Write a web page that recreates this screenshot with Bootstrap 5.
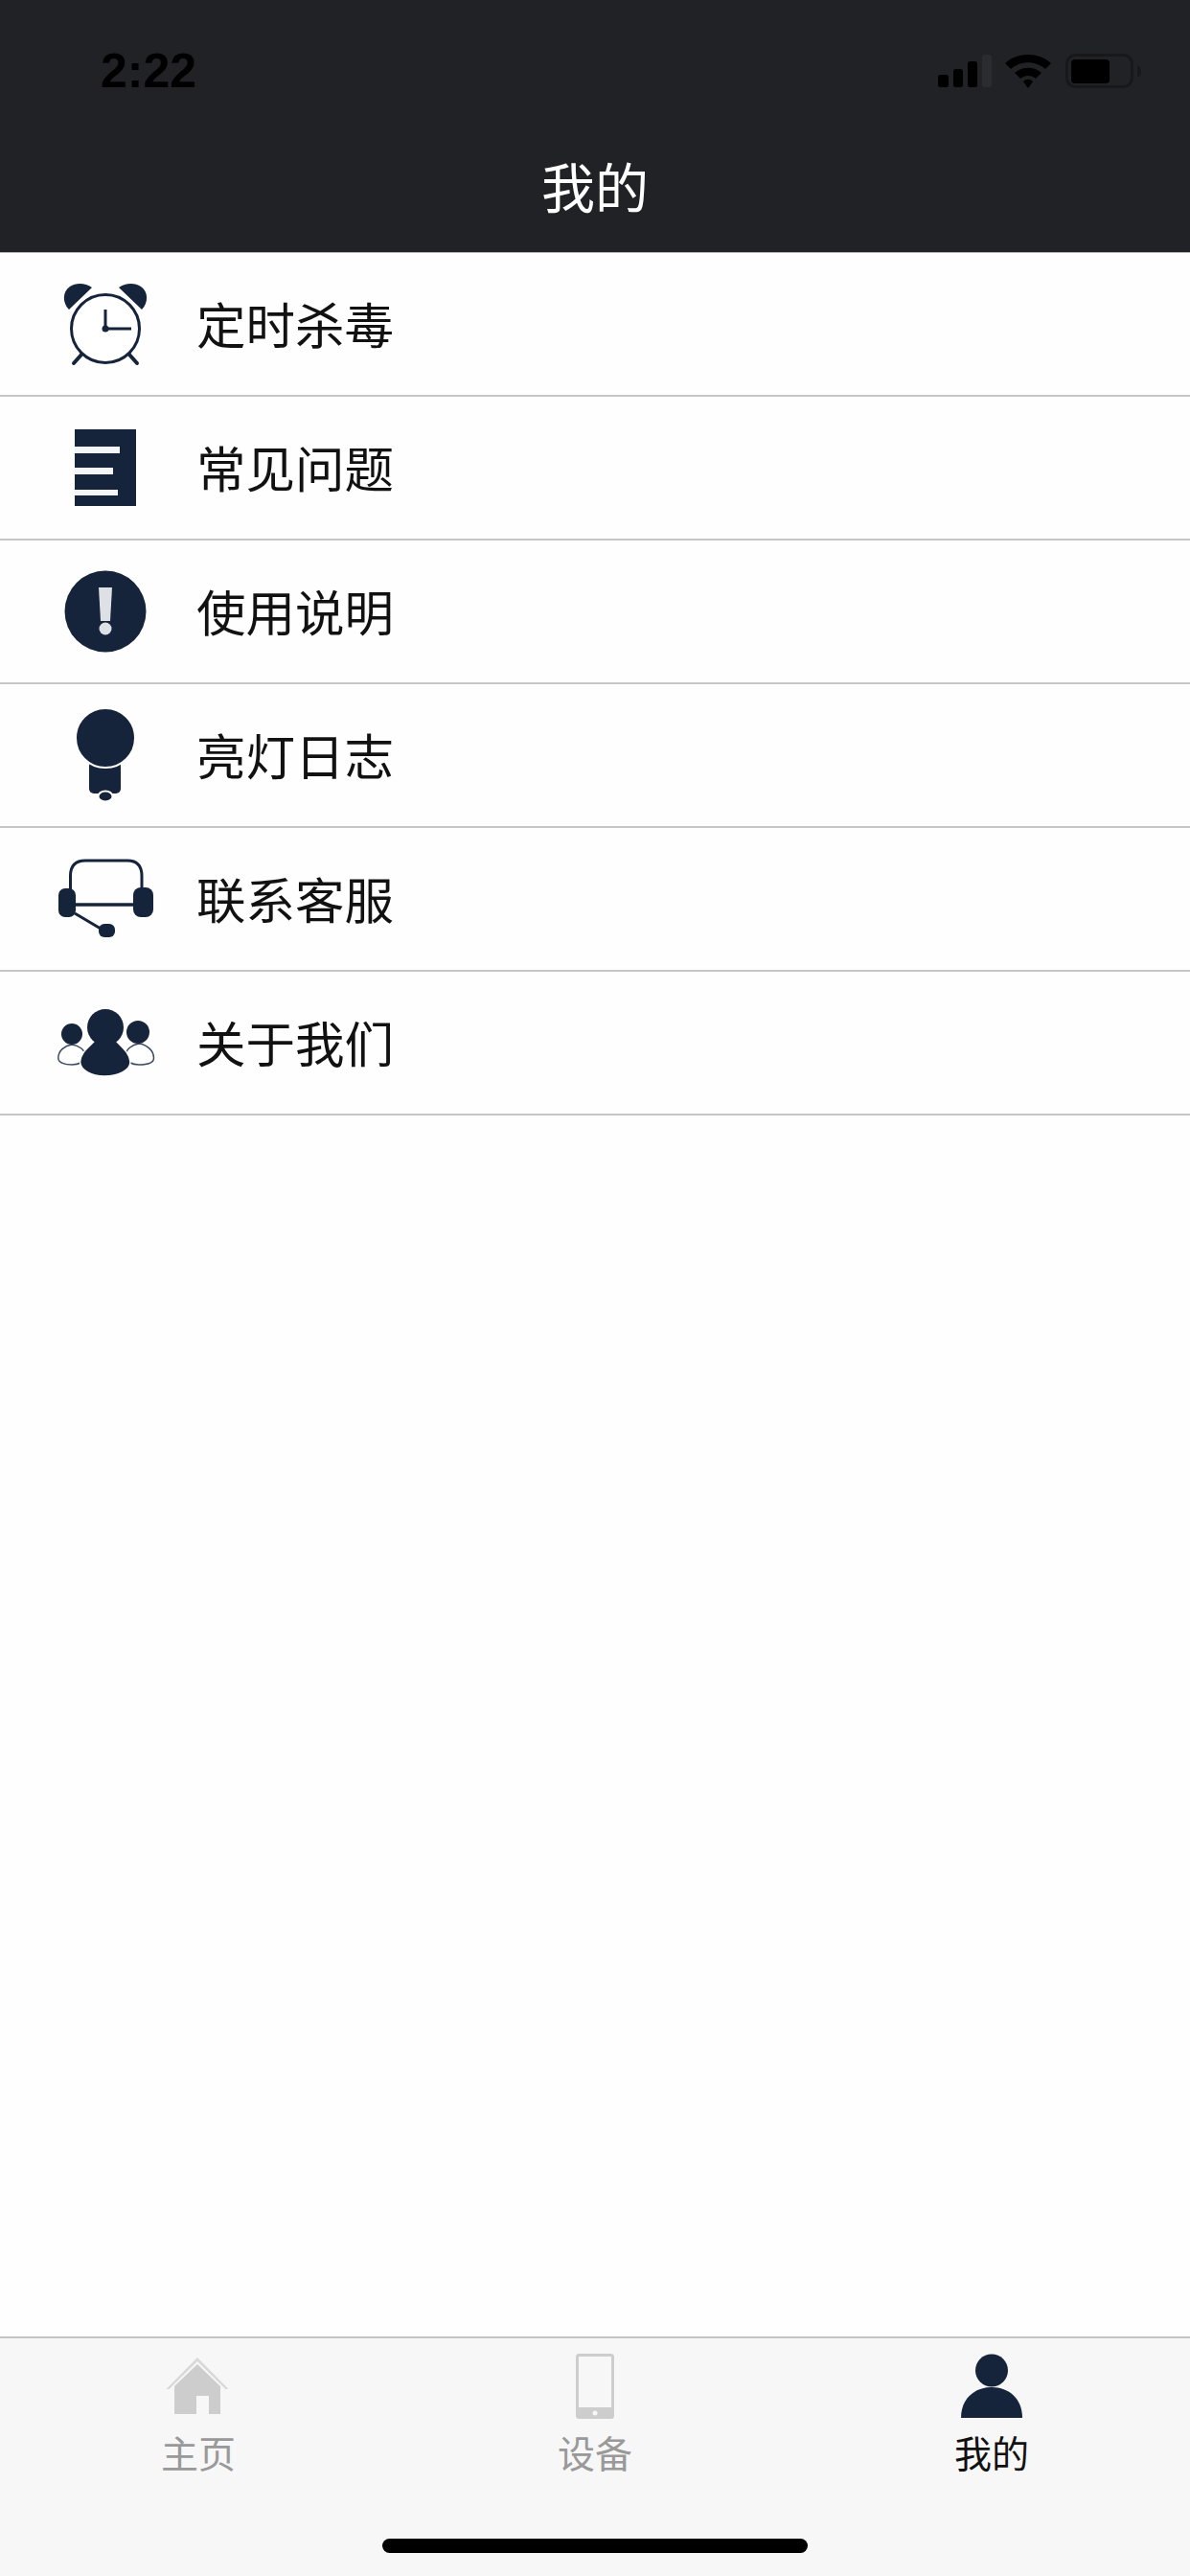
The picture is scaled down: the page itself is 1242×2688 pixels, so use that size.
<!DOCTYPE html>
<html lang="zh-CN">
<head>
  <meta charset="UTF-8">
  <title>我的</title>
  <link rel="stylesheet" href="https://cdn.jsdelivr.net/npm/bootstrap@5.3.0/dist/css/bootstrap.min.css">
  <style>
    body { font-family: "Liberation Sans", "Noto Sans CJK SC", sans-serif; background: #fefefe; }
    .app-screen { height: 2688px; }
    .app-head { background: #212226; border-bottom: 1px solid #b5b5b5; }
    .status-row { height: 148px; padding: 0 51px 0 105px; }
    .status-time { font-size: 50px; font-weight: 700; line-height: 1; color: #000; }
    .head-title { font-family: "Noto Sans CJK SC", sans-serif; font-size: 56px; line-height: 90px; padding-bottom: 25px; color: #fff; text-align: center; }
    .list-group-flush > .list-group-item.menu-row { height: 150px; padding: 0 0 0 55px; border-width: 0 0 2px; border-style: solid; border-color: #c6c6c6; border-radius: 0; background: transparent; }
    .menu-icon { width: 110px; height: 100px; flex: none; margin-right: 40px; }
    .menu-text { font-family: "Noto Sans CJK SC", sans-serif; font-size: 51.5px; line-height: 1; padding-bottom: 2px; color: #111; }
    .tab-wrap { height: 250px; background: #f7f7f7; border-top: 2px solid #c4c4c4; padding-top: 15px; }
    .tab-icon { width: 80px; height: 72px; display: block; margin: 0 auto; }
    .tab-text { font-family: "Noto Sans CJK SC", sans-serif; font-size: 39px; line-height: 46px; margin-top: 8px; text-align: center; color: #999; }
    .tab-on { color: #111; }
    .home-bar { width: 444px; height: 15px; background: #000; border-radius: 8px; margin: 68px auto 0; }
  </style>
</head>
<body>
<div class="app-screen d-flex flex-column">
  <header class="app-head">
    <div class="status-row d-flex justify-content-between align-items-center">
      <span class="status-time">2:22</span>
      <svg width="212" height="36" viewBox="979 56 212 36">
        <rect x="979" y="78" width="11" height="13" rx="2.5" fill="#000"/>
        <rect x="995" y="72" width="10" height="19" rx="2.5" fill="#000"/>
        <rect x="1010" y="64" width="10" height="27" rx="2.5" fill="#000"/>
        <rect x="1025" y="57" width="10" height="34" rx="2.5" fill="#2b2c30"/>
        <path d="M1049 66 C1062 54 1084 54 1097 66 L1091 72 C1081 63 1065 63 1055 72 Z" fill="#000"/>
        <path d="M1059 76 C1067 69 1079 69 1087 76 L1081 82 C1076 78 1070 78 1065 82 Z" fill="#000"/>
        <path d="M1068 85 C1071 82 1075 82 1078 85 L1073 92 Z" fill="#000"/>
        <rect x="1113.5" y="57.5" width="68" height="33" rx="9" fill="none" stroke="#17181b" stroke-width="3"/>
        <rect x="1118" y="62" width="40" height="25" rx="4" fill="#000"/>
        <path d="M1187 68 C1190 70 1191 72 1191 74.500 C1191 77 1190 79 1187 81 Z" fill="#17181b"/>
      </svg>
    </div>
    <div class="head-title">我的</div>
  </header>

  <div class="list-group list-group-flush flex-grow-1">
    <a class="list-group-item menu-row d-flex align-items-center">
      <svg class="menu-icon" viewBox="0 0 110 100">
        <path d="M17 35 C10 28 10 16 18 11 C24 7 34 7 41 12 Z" fill="#15233b"/>
        <path d="M93 35 C100 28 100 16 92 11 C86 7 76 7 69 12 Z" fill="#15233b"/>
        <circle cx="55" cy="55" r="35.500" fill="#fff" stroke="#15233b" stroke-width="3"/>
        <path d="M55 35 V55 H82" fill="none" stroke="#15233b" stroke-width="3"/>
        <circle cx="55" cy="55" r="3.500" fill="#15233b"/>
        <path d="M30 82 L22 91 M80 82 L88 91" stroke="#15233b" stroke-width="4" stroke-linecap="round"/>
      </svg>
      <span class="menu-text">定时杀毒</span>
    </a>
    <a class="list-group-item menu-row d-flex align-items-center">
      <svg class="menu-icon" viewBox="0 0 110 100">
        <rect x="23" y="10" width="64" height="80" fill="#15233b"/>
        <rect x="23" y="28" width="47" height="7" fill="#f4f5f6"/>
        <rect x="23" y="50" width="40" height="7" fill="#f4f5f6"/>
        <rect x="23" y="73" width="45" height="6" fill="#f4f5f6"/>
      </svg>
      <span class="menu-text">常见问题</span>
    </a>
    <a class="list-group-item menu-row d-flex align-items-center">
      <svg class="menu-icon" viewBox="0 0 110 100">
        <circle cx="55" cy="50" r="42.500" fill="#15233b"/>
        <polygon points="48,25 62,25 60,60 50,60" fill="#dde1e6"/>
        <circle cx="55" cy="68" r="6.500" fill="#dde1e6"/>
      </svg>
      <span class="menu-text">使用说明</span>
    </a>
    <a class="list-group-item menu-row d-flex align-items-center">
      <svg class="menu-icon" viewBox="0 0 110 100">
        <rect x="38" y="56" width="33" height="34" rx="5" fill="#15233b"/>
        <circle cx="55" cy="32" r="31" fill="#15233b" stroke="#fff" stroke-width="2"/>
        <ellipse cx="55" cy="93" rx="7.500" ry="5.500" fill="#15233b" stroke="#fff" stroke-width="2"/>
      </svg>
      <span class="menu-text">亮灯日志</span>
    </a>
    <a class="list-group-item menu-row d-flex align-items-center">
      <svg class="menu-icon" viewBox="0 0 110 100">
        <path d="M18.500 40 V26 Q18.500 10 34 10 H78 Q93 10 93 26 V40" fill="none" stroke="#15233b" stroke-width="3"/>
        <path d="M24 56 H84" stroke="#15233b" stroke-width="3.500"/>
        <path d="M23 65 L50 81" stroke="#15233b" stroke-width="3"/>
        <rect x="6" y="39" width="18" height="30" rx="7" fill="#15233b"/>
        <rect x="84" y="38" width="21" height="31" rx="8" fill="#15233b"/>
        <rect x="48" y="76" width="17" height="14" rx="6" fill="#15233b"/>
      </svg>
      <span class="menu-text">联系客服</span>
    </a>
    <a class="list-group-item menu-row d-flex align-items-center">
      <svg class="menu-icon" viewBox="0 0 110 100">
        <path d="M5.800 66 C5.800 58 13 53 20 52 C27 53 34 57 34 64 C34 70 27 73 20 73 C13 73 5.800 71 5.800 66 Z" fill="#fff" stroke="#3c4a5e" stroke-width="1.500"/>
        <path d="M105.500 66 C105.500 58 98 52 90 51 C83 52 76 57 76 64 C76 70 83 73 90 73 C98 73 105.500 71 105.500 66 Z" fill="#fff" stroke="#3c4a5e" stroke-width="1.500"/>
        <circle cx="20" cy="41" r="11" fill="#15233b"/>
        <circle cx="89" cy="39" r="12" fill="#15233b"/>
        <path d="M44 48 C36 56 29 61 28.500 70 C29 79 41 85 54 85 C68 85 81 79 81 70 C80 61 74 56 66 48 Z" fill="#15233b" stroke="#fff" stroke-width="1.500"/>
        <circle cx="55" cy="34" r="19" fill="#15233b"/>
      </svg>
      <span class="menu-text">关于我们</span>
    </a>
  </div>

  <footer class="tab-wrap">
    <div class="row g-0">
      <div class="col-4">
        <svg class="tab-icon" viewBox="0 0 80 72">
          <path d="M39 5 L71.500 38 H68.500 L39 9 L9.500 38 H6.500 Z" fill="#d8d8d8"/>
          <path d="M39 12 L63 35 V64 H51 V45 H38 V64 H15 V35 Z" fill="#cdcdcd"/>
        </svg>
        <div class="tab-text">主页</div>
      </div>
      <div class="col-4">
        <svg class="tab-icon" viewBox="0 0 80 72">
          <rect x="21.500" y="2.500" width="37" height="65" rx="2" fill="none" stroke="#cdcdcd" stroke-width="3"/>
          <rect x="21" y="57" width="38" height="11" fill="#cdcdcd"/>
          <circle cx="40" cy="63" r="2.500" fill="#f7f7f7"/>
        </svg>
        <div class="tab-text">设备</div>
      </div>
      <div class="col-4">
        <svg class="tab-icon" viewBox="0 0 80 72">
          <circle cx="40" cy="18.500" r="17" fill="#15233b"/>
          <path d="M8 68 C8 48 22 36 40 36 C58 36 72 48 72 68 Z" fill="#15233b"/>
        </svg>
        <div class="tab-text tab-on">我的</div>
      </div>
    </div>
    <div class="home-bar"></div>
  </footer>
</div>
<script src="https://cdn.jsdelivr.net/npm/bootstrap@5.3.0/dist/js/bootstrap.bundle.min.js"></script>
</body>
</html>
